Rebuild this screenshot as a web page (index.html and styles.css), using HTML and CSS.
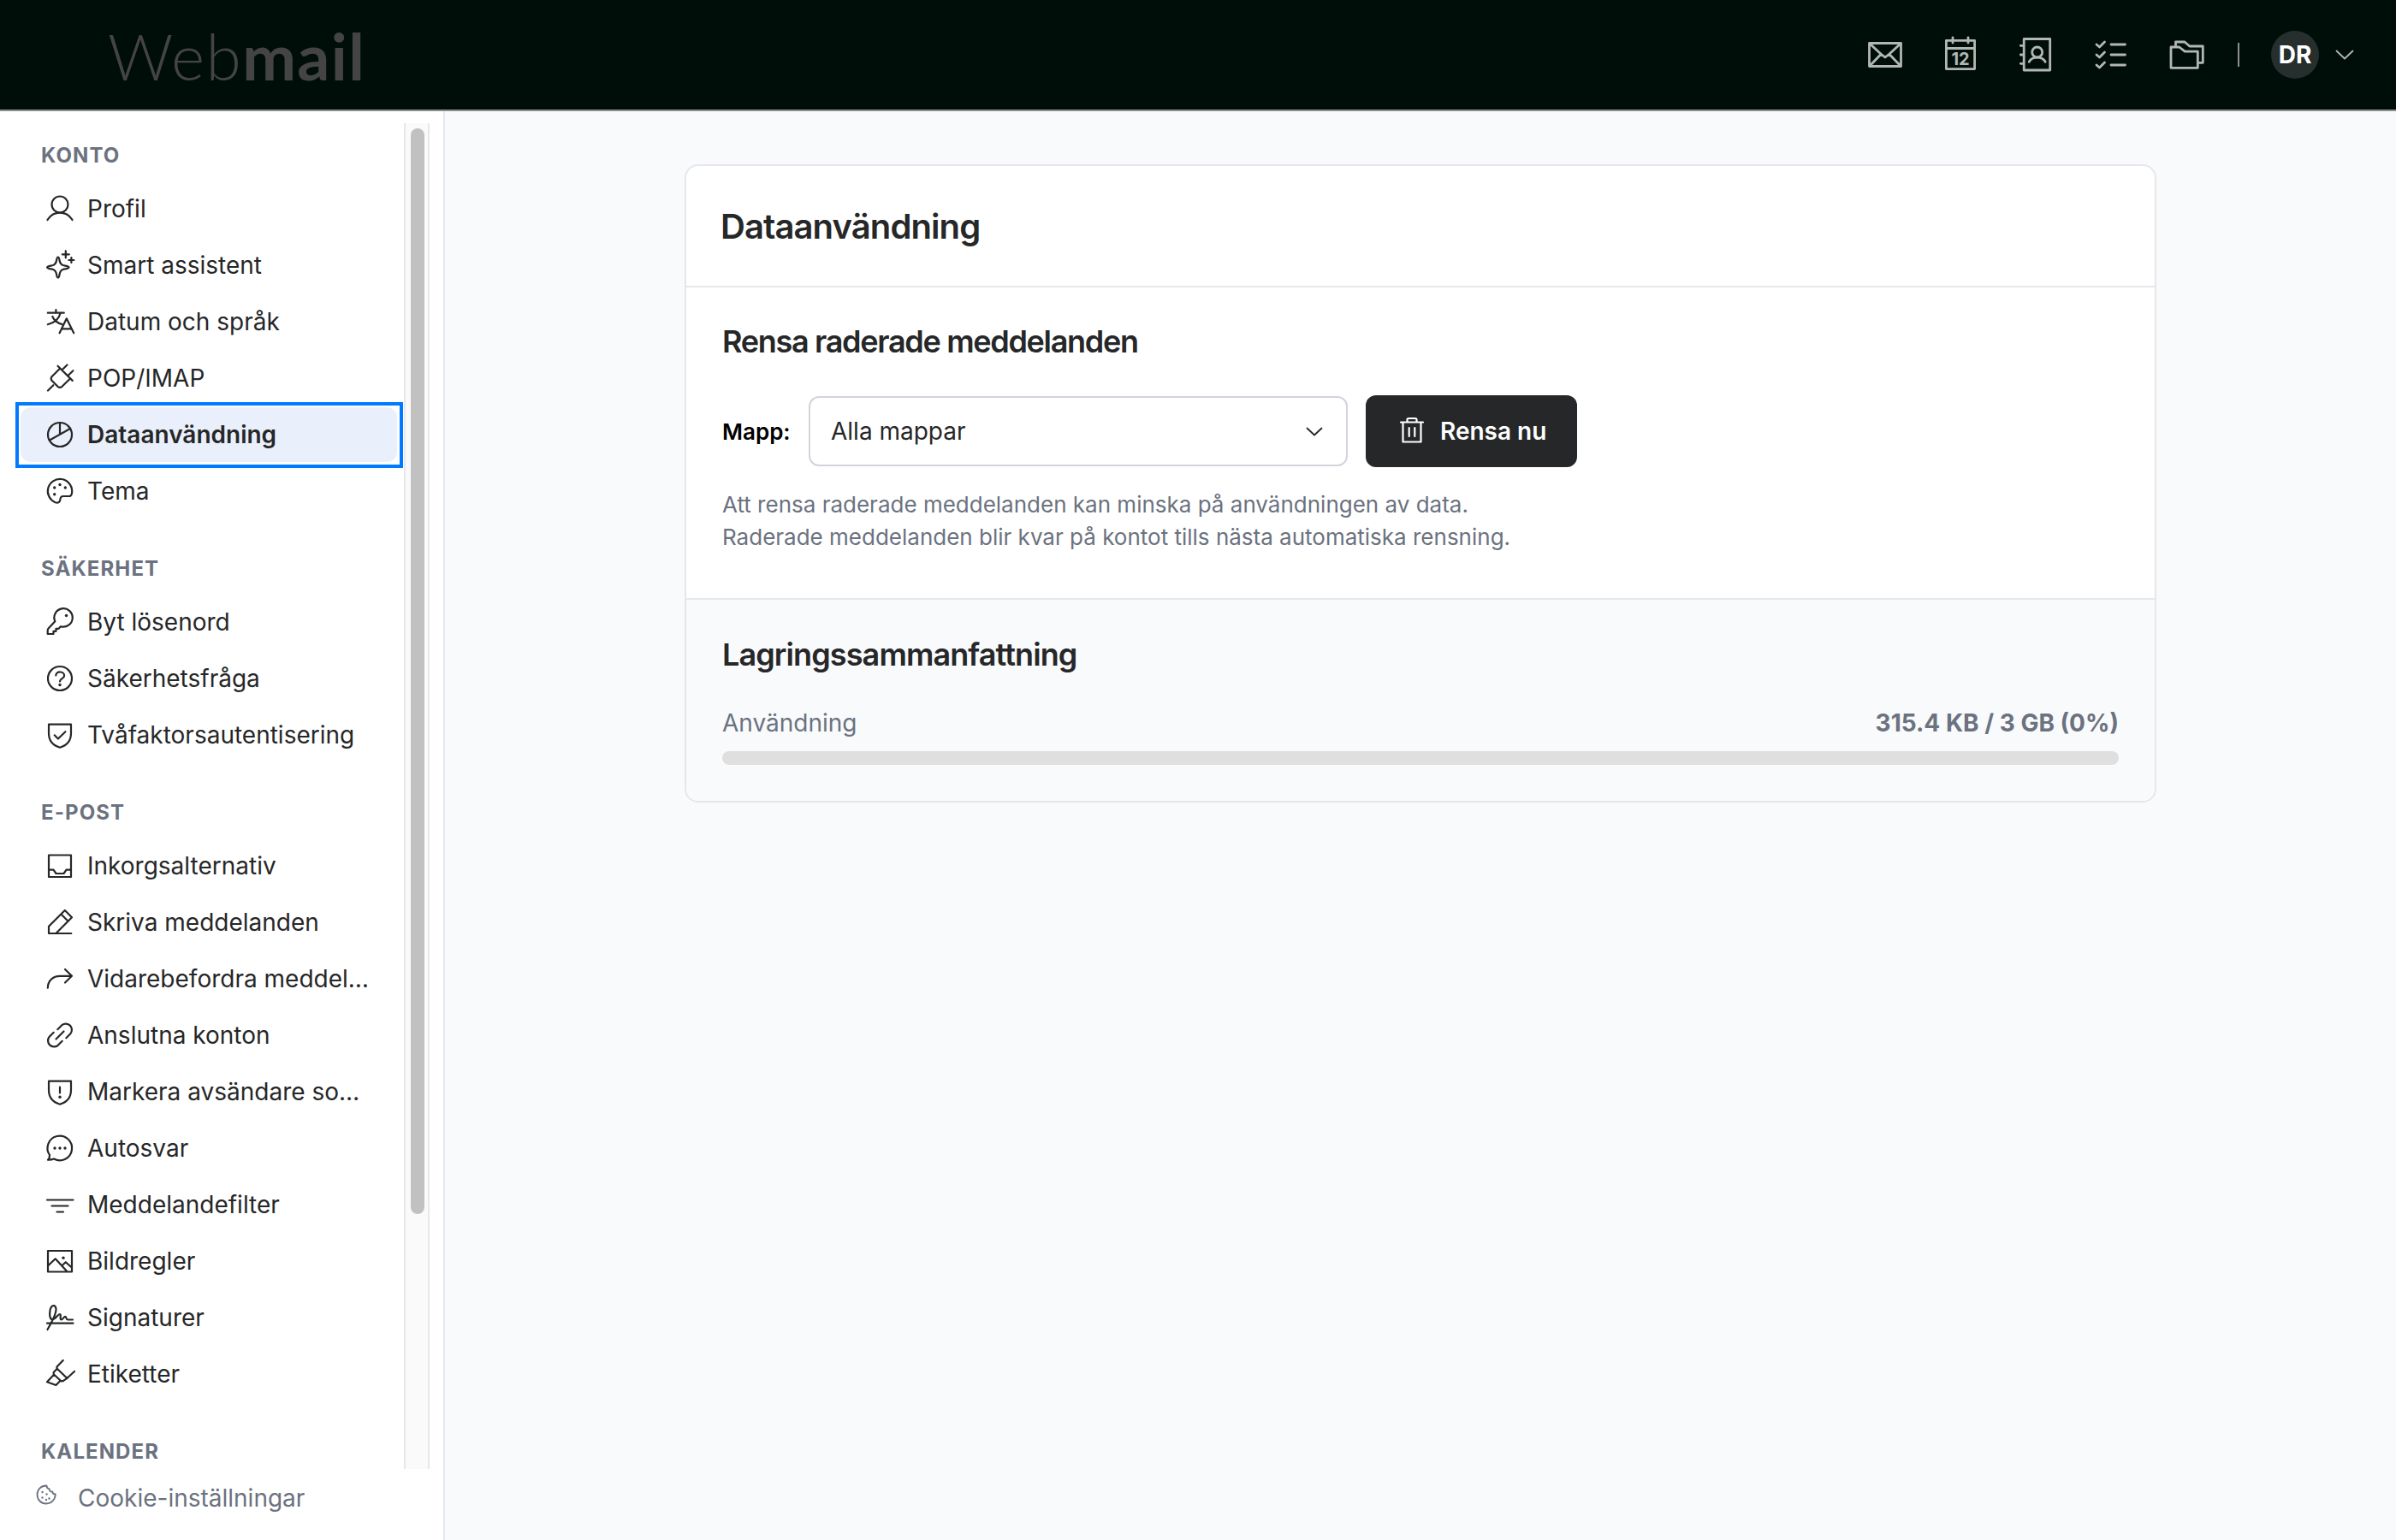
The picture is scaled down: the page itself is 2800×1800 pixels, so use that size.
FILE: index.html
```html
<!DOCTYPE html>
<html lang="sv">
<head>
<meta charset="utf-8">
<title>Webmail</title>
<link rel="stylesheet" href="styles.css">
</head>
<body>
<header class="topbar">
  <div class="logo"><span class="logo-thin">Web</span><span class="logo-bold">mail</span></div>
  <nav class="tools">
    <svg class="tool" viewBox="0 0 44 44"><path d="M3.500 8.500h37v27h-37zM4.500 9.500L17 21l5 4 5-4L39.500 9.500M4.500 34.500L17 21.500M39.500 34.500L27 21.500"/></svg>
    <svg class="tool" viewBox="0 0 44 44"><path d="M5.400 5.400h33.200v33.200H5.400zM5.400 14.500h33.200M13 2v6M31 2v6"/><text class="cal-day" x="22" y="33.500">12</text></svg>
    <svg class="tool" viewBox="0 0 44 44"><path d="M8.200 3.500h30.500v36.500H8.200zM4.300 11.300h4M4.300 22h4M4.300 32.300h4"/><circle cx="23.700" cy="19" r="6"/><path d="M14.200 30.200c2-3.500 5.500-5 9.500-5s7.500 1.500 9.500 5"/></svg>
    <svg class="tool" viewBox="0 0 44 44"><path d="M22 10h16.500M22 22h16.500M22 34h16.500M5 10l3.500 3 6-6M5 22l3.500 3 6-6M5 34l3.500 3 6-6"/></svg>
    <svg class="tool" viewBox="0 0 44 44"><path d="M4 37.300V13h9.700l6.600 5.200h15v19.100zM9.500 12.500V7H20l5.800 5h15.500v19.300h-5"/></svg>
    <span class="divider"></span>
    <span class="avatar">DR</span>
    <svg class="caret" viewBox="0 0 22 12"><path d="M1.500 1.500L11 10.500l9.500-9"/></svg>
  </nav>
</header>
<div class="shell">
  <aside class="sidebar">
    <div class="scroller">
      <div class="menu">
        <h3 class="group">Konto</h3>
        <ul class="items">
          <li class="item"><svg class="icon" viewBox="0 0 36 36"><circle cx="18" cy="13" r="9.500"/><path d="M3.500 31C7 25.500 12 22.700 18 22.700S29 25.500 32.500 31"/></svg><span class="label">Profil</span></li>
          <li class="item"><svg class="icon" viewBox="0 0 36 36"><path d="M15.800 8.500c.8 0 1.300 1 1.700 3.500.5 3.500 1.500 5 4 6 2.500.8 7 1 7 2.500s-4.500 1.700-7 2.500c-2.500 1-3.500 2.500-4 6-.4 2.500-.9 3.500-1.700 3.500s-1.300-1-1.700-3.500c-.5-3.500-1.500-5-4-6-2.500-.8-7-1-7-2.500s4.500-1.700 7-2.500c2.500-1 3.500-2.500 4-6 .4-2.500.9-3.500 1.700-3.500zM24.800 1.300v8M20.800 5.300h8M31.400 9v6M28.400 12h6"/></svg><span class="label">Smart assistent</span></li>
          <li class="item"><svg class="icon" viewBox="0 0 36 36"><path d="M3.800 7.700h19M13.400 4v3.700M18.600 8c-1.600 6.500-7 11.300-14.800 13.200M9.300 12c2 4.500 6 7.800 11.700 9.300M17.600 31.300l8.200-17 8.400 17M20 26.300h11.700"/></svg><span class="label">Datum och språk</span></li>
          <li class="item"><svg class="icon" viewBox="0 0 36 36"><path d="M4 32.500l6.300-6.300M15.500 3.700l17.200 17.200M20.600 8.300l5.900-5.800M27.500 15l5.900-5.800M18 6.700L8.500 16.200a4 4 0 0 0 0 4.600l7 7a4 4 0 0 0 5 0L30 18.500"/></svg><span class="label">POP/IMAP</span></li>
          <li class="item item-active"><svg class="icon" viewBox="0 0 36 36"><circle cx="18" cy="18" r="14"/><path d="M18 4v14M30 11L6 24.500"/></svg><span class="label">Dataanvändning</span></li>
          <li class="item"><svg class="icon" viewBox="0 0 36 36"><path d="M22 24h7q3.200 0 3.200-6A14.200 14.200 0 1 0 12.500 31.200q5 1.500 5.800-3 .3-4.200 3.700-4.200z"/><path class="dots" d="M11.700 14h.01M18 10.500h.01M24.300 14h.01M11.700 21.700h.01"/></svg><span class="label">Tema</span></li>
        </ul>
        <h3 class="group">Säkerhet</h3>
        <ul class="items">
          <li class="item"><svg class="icon" viewBox="0 0 36 36"><path d="M12.300 17.300L4.600 25.500q-.9 1-.9 2.300V32h6.800v-3.200h3v-3h3l2.500-2.600A10.700 10.700 0 1 0 12.300 17.300z"/><path class="dots" d="M25.500 10.500h.01"/></svg><span class="label">Byt lösenord</span></li>
          <li class="item"><svg class="icon" viewBox="0 0 36 36"><circle cx="18" cy="18" r="14"/><path d="M13.300 14.500c.2-5.500 9.800-5.300 9.800.2 0 3.700-5 3.200-5.100 6.800"/><path class="dots" d="M18 25.500h.01"/></svg><span class="label">Säkerhetsfråga</span></li>
          <li class="item"><svg class="icon" viewBox="0 0 36 36"><path d="M5 5.700h26V16c0 9.500-5.500 14.500-13 16.700C10.500 30.500 5 25.500 5 16zM11.700 18.300l4.200 4.200 8.500-8.300"/></svg><span class="label">Tvåfaktorsautentisering</span></li>
        </ul>
        <h3 class="group">E-post</h3>
        <ul class="items">
          <li class="item"><svg class="icon" viewBox="0 0 36 36"><path d="M5 5.500h26v25.500H5zM5 22.700h5.500l3 4.300h9l3-4.300H31"/></svg><span class="label">Inkorgsalternativ</span></li>
          <li class="item"><svg class="icon" viewBox="0 0 36 36"><path d="M31.300 31H5v-8.300L23.800 4l8.200 8.300L13.400 31M19.400 8.500l8.200 8.200"/></svg><span class="label">Skriva meddelanden</span></li>
          <li class="item"><svg class="icon" viewBox="0 0 36 36"><path d="M3.800 28.700C4 20 10 14.800 18 14.800h14M24 7l8 7.800-8 7.700"/></svg><span class="label">Vidarebefordra meddel…</span></li>
          <li class="item"><svg class="icon" viewBox="0 0 36 36"><path d="M13.500 22.500l9-9M15.300 11.200l5-5a7.100 7.100 0 0 1 10 10l-5 5M20.700 24.800l-5 5a7.100 7.100 0 0 1-10-10l5-5"/></svg><span class="label">Anslutna konton</span></li>
          <li class="item"><svg class="icon" viewBox="0 0 36 36"><path d="M5 5.700h26V16c0 9.500-5.500 14.500-13 16.700C10.500 30.500 5 25.500 5 16zM18 12.700v6.800"/><path class="dots" d="M18 24.300h.01"/></svg><span class="label">Markera avsändare so…</span></li>
          <li class="item"><svg class="icon" viewBox="0 0 36 36"><path d="M6 26a14.300 14.300 0 1 1 5 4.500q-3 1.400-7 1.200 2.300-2.200 2-5.700z"/><path class="dots" d="M12 18h.01M18 18h.01M24 18h.01"/></svg><span class="label">Autosvar</span></li>
          <li class="item"><svg class="icon" viewBox="0 0 36 36"><path d="M3 12.500h30.500M8.500 19.500h19M14.500 26.500h7.500"/></svg><span class="label">Meddelandefilter</span></li>
          <li class="item"><svg class="icon" viewBox="0 0 36 36"><path d="M4 6h28v24.500H4zM4.500 23l8.200-7.700 13.800 15M21 22.700l3.800-3.500 7 6.300"/><path class="dots" d="M22 14.300h.01"/></svg><span class="label">Bildregler</span></li>
          <li class="item"><svg class="icon" viewBox="0 0 36 36"><path d="M3 24.700h30.500M3.500 32C7 26 13.500 14.500 13.500 8.500c0-6-5.500-6-7 1-1 6 0 10.500 2.500 10.700 4 .3 6.500-6.200 9-6.200 1.800 0-.5 6.500 1.500 6.500s3-3.700 4.800-3.700c1.300 0 .7 3.700 3 3.700H33"/></svg><span class="label">Signaturer</span></li>
          <li class="item"><svg class="icon" viewBox="0 0 36 36"><path d="M21.700 2l-7.200 7.500v2.500l-3.800 4v3L3 27.300 13.400 31l5.200-5.200 2.700.5 5.200-3.500 8.700-8M14.500 11.500l12 11.500M11 18.500l7.800 7.300"/></svg><span class="label">Etiketter</span></li>
        </ul>
        <h3 class="group">Kalender</h3>
      </div>
      <div class="track"><div class="thumb"></div></div>
    </div>
    <footer class="cookie">
      <svg class="cookie-icon" viewBox="0 0 24 24"><path d="M12.500 1.500C6 1.300 1.500 6 1.500 12S6 22.500 12 22.500 22.500 18 22.800 11.500c-2 0-3.300-.9-3.600-3-2.200.3-3.700-.9-3.500-3.200-2-.3-3.200-1.600-3.200-3.800z"/><path class="dots" d="M7.500 9h.01M12.500 11.500h.01M7.500 15.500h.01M15.500 16.500h.01M12 18h.01"/></svg>
      <span class="cookie-label">Cookie-inställningar</span>
    </footer>
  </aside>
  <main class="content">
    <section class="card">
      <div class="card-head"><h1 class="title">Dataanvändning</h1></div>
      <div class="card-body">
        <h2 class="subtitle subtitle-purge">Rensa raderade meddelanden</h2>
        <div class="form-row">
          <span class="field-label">Mapp:</span>
          <div class="select"><span class="select-value">Alla mappar</span><svg class="select-caret" viewBox="0 0 20 11"><path d="M1.500 1.500L10 9.500l8.500-8"/></svg></div>
          <button class="button" type="button"><svg class="trash" viewBox="0 0 28 32"><path d="M1 6.500h26M3.500 6.500v23h21v-23M8.500 6V3.500q0-1.500 1.500-1.500h8q1.500 0 1.500 1.500V6M10.700 13v10M17.300 13v10"/></svg><span class="button-label">Rensa nu</span></button>
        </div>
        <p class="help">Att rensa raderade meddelanden kan minska på användningen av data.<br>Raderade meddelanden blir kvar på kontot tills nästa automatiska rensning.</p>
      </div>
      <div class="card-foot">
        <h2 class="subtitle subtitle-storage">Lagringssammanfattning</h2>
        <div class="usage"><span class="usage-label">Användning</span><strong class="usage-value">315.4 KB / 3 GB (0%)</strong></div>
        <div class="bar"></div>
      </div>
    </section>
  </main>
</div>
</body>
</html>
```
FILE: styles.css
```css
* { box-sizing: border-box; }
body { margin: 0; width: 2800px; height: 1800px; overflow: hidden; background: #f9fafc; color: #262728; font-family: Inter, "Liberation Sans", sans-serif; font-size: 28px; display: flex; flex-direction: column; }
svg { display: block; fill: none; stroke: currentColor; stroke-linecap: round; stroke-linejoin: round; flex: none; }
h1, h2, h3, p, ul { margin: 0; padding: 0; }
ul { list-style: none; }

.topbar { height: 130px; background: #000e0a; border-bottom: 2px solid #8b8f8e; display: flex; align-items: center; justify-content: space-between; padding: 0 49px 0 126px; }
.logo { font-family: Lato, sans-serif; font-size: 75px; line-height: 90px; letter-spacing: 1.4px; color: #444444; padding-top: 1px; }
.logo-thin { font-weight: 300; }
.logo-bold { font-weight: 700; }
.tools { display: flex; align-items: center; color: #b2b7b5; }
.tool { width: 44px; height: 44px; margin-right: 44px; stroke-width: 2.8; }
.cal-day { font-size: 20px; font-weight: 700; fill: currentColor; stroke: none; text-anchor: middle; }
.divider { width: 2px; height: 28px; background: #8c9090; margin-left: -6px; margin-right: 37px; }
.avatar { width: 56px; height: 56px; border-radius: 50%; background: #262f2d; color: #fff; font-weight: 700; line-height: 56px; text-align: center; }
.caret { width: 22px; height: 12px; margin-left: 19px; stroke-width: 1.8; }

.shell { flex: 1; display: flex; min-height: 0; }
.sidebar { width: 520px; background: #fff; border-right: 2px solid #e5e7ee; padding-top: 14px; display: flex; flex-direction: column; }
.scroller { height: 1573px; display: flex; overflow: hidden; }
.menu { width: 472px; padding: 20px 8px 0 24px; }
.group { height: 36px; line-height: 36px; font-size: 24px; font-weight: 700; letter-spacing: 1.1px; text-transform: uppercase; color: #6b7280; padding-left: 24px; }
.items { padding: 12px 0 41px; display: flex; flex-direction: column; gap: 2px; }
.item { height: 64px; border-radius: 12px; display: flex; align-items: center; padding: 0 24px 0 28px; gap: 14px; position: relative; }
.item-active { background: #eaf0fb; font-weight: 600; }
.item-active::after { content: ""; position: absolute; inset: -6px -7px -7px -6px; border: 4px solid #007aff; }
.icon { width: 36px; height: 36px; stroke-width: 2.2; }
.dots { stroke-width: 3.4; }
.label { white-space: nowrap; line-height: 40px; }
.track { width: 30px; background: #fafafa; border: solid #e8e8e8; border-width: 0 2px; padding: 6px; }
.thumb { width: 16px; height: 1269px; border-radius: 8px; background: #c1c1c1; }
.cookie { display: flex; align-items: center; color: #6b7280; padding-left: 42px; height: 68px; gap: 25px; }
.cookie-icon { width: 24px; height: 24px; stroke-width: 1.8; margin-bottom: 8px; }
.cookie-icon .dots { stroke-width: 2.4; }

.content { flex: 1; padding: 62px 280px 0; }
.card { border: 2px solid #e5e7eb; border-radius: 16px; background: #fff; height: 746px; overflow: hidden; }
.card-head { height: 142px; border-bottom: 2px solid #e5e7eb; padding: 47px 40px 0; }
.title { font-size: 40px; line-height: 48px; font-weight: 600; letter-spacing: -.9px; }
.card-body { height: 365px; border-bottom: 2px solid #e5e7eb; padding: 41px 42px 0; }
.subtitle { font-size: 36px; line-height: 44px; font-weight: 600; }
.subtitle-purge { letter-spacing: -1.3px; }
.subtitle-storage { letter-spacing: -.9px; }
.form-row { display: flex; align-items: center; margin-top: 41px; height: 84px; }
.field-label { width: 101px; font-size: 26px; font-weight: 600; color: #000; }
.select { width: 630px; height: 82px; border: 2px solid #d1d5db; border-radius: 12px; display: flex; align-items: center; justify-content: space-between; padding: 0 27px 0 24px; }
.select-caret { width: 20px; height: 11px; stroke-width: 1.8; }
.button { margin-left: 21px; width: 247px; height: 84px; border: 0; border-radius: 12px; background: #262728; color: #fff; font: 600 28px Inter, sans-serif; display: flex; align-items: center; padding: 0 0 0 40px; gap: 19px; }
.trash { width: 28px; height: 32px; stroke-width: 2.2; margin-bottom: 2px; }
.help { margin-top: 25px; font-size: 26px; line-height: 38px; color: #6b7280; }
.card-foot { height: 235px; background: #f9fafc; padding: 42px 42px 0; }
.usage { display: flex; justify-content: space-between; margin-top: 36px; line-height: 44px; color: #6b7280; }
.usage-value { font-weight: 700; }
.bar { height: 16px; border-radius: 8px; background: #dfdfdf; margin-top: 11px; }
```
